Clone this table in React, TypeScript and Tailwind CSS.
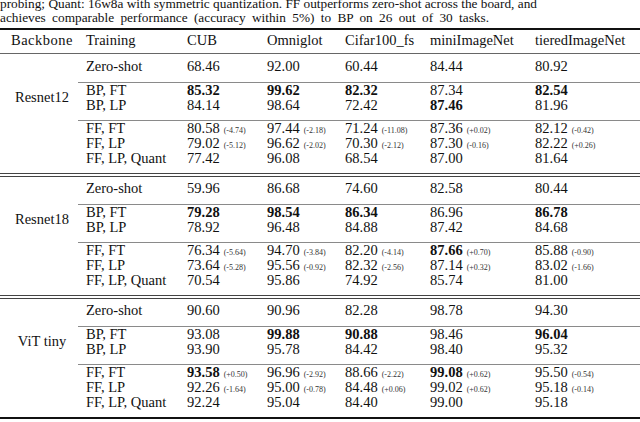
const serif = "font-['Liberation_Serif','Times_New_Roman',serif]";

type Cell = string;
type Row = [string, Cell[]];
type Group = { name: string; zs: Cell[]; bp: Row[]; ff: Row[] };

// "**" prefix = bold, "|" splits the small delta note
const groups: Group[] = [
  {
    name: "Resnet12",
    zs: ["68.46", "92.00", "60.44", "84.44", "80.92"],
    bp: [
      ["BP, FT", ["**85.32", "**99.62", "**82.32", "87.34", "**82.54"]],
      ["BP, LP", ["84.14", "98.64", "72.42", "**87.46", "81.96"]],
    ],
    ff: [
      ["FF, FT", ["80.58|-4.74", "97.44|-2.18", "71.24|-11.08", "87.36|+0.02", "82.12|-0.42"]],
      ["FF, LP", ["79.02|-5.12", "96.62|-2.02", "70.30|-2.12", "87.30|-0.16", "82.22|+0.26"]],
      ["FF, LP, Quant", ["77.42", "96.08", "68.54", "87.00", "81.64"]],
    ],
  },
  {
    name: "Resnet18",
    zs: ["59.96", "86.68", "74.60", "82.58", "80.44"],
    bp: [
      ["BP, FT", ["**79.28", "**98.54", "**86.34", "86.96", "**86.78"]],
      ["BP, LP", ["78.92", "96.48", "84.88", "87.42", "84.68"]],
    ],
    ff: [
      ["FF, FT", ["76.34|-5.64", "94.70|-3.84", "82.20|-4.14", "**87.66|+0.70", "85.88|-0.90"]],
      ["FF, LP", ["73.64|-5.28", "95.56|-0.92", "82.32|-2.56", "87.14|+0.32", "83.02|-1.66"]],
      ["FF, LP, Quant", ["70.54", "95.86", "74.92", "85.74", "81.00"]],
    ],
  },
  {
    name: "ViT tiny",
    zs: ["90.60", "90.96", "82.28", "98.78", "94.30"],
    bp: [
      ["BP, FT", ["93.08", "**99.88", "**90.88", "98.46", "**96.04"]],
      ["BP, LP", ["93.90", "95.78", "84.42", "98.40", "95.32"]],
    ],
    ff: [
      ["FF, FT", ["**93.58|+0.50", "96.96|-2.92", "88.66|-2.22", "**99.08|+0.62", "95.50|-0.54"]],
      ["FF, LP", ["92.26|-1.64", "95.00|-0.78", "84.48|+0.06", "99.02|+0.62", "95.18|-0.14"]],
      ["FF, LP, Quant", ["92.24", "95.04", "84.40", "99.00", "95.18"]],
    ],
  },
];

const cols = "grid grid-cols-[101px_80px_78px_85px_105px_1fr]";

function Value({ v }: { v: string }) {
  const bold = v.startsWith("**");
  const [num, note] = v.replace("**", "").split("|");
  return (
    <div className="h-[15px] pl-2 whitespace-nowrap">
      <span className={bold ? "font-bold" : ""}>{num}</span>
      {note && <span className="ml-[4px] text-[8px] leading-none text-[#333]">({note})</span>}
    </div>
  );
}

function Rows({ rows }: { rows: Row[] }) {
  return (
    <div className={cols}>
      {rows.map(([label, vals]) => (
        <div key={label} className="contents">
          <div className="h-[15px] pl-2 whitespace-nowrap">{label}</div>
          {vals.map((v, i) => (
            <Value key={i} v={v} />
          ))}
        </div>
      ))}
    </div>
  );
}

function GroupBlock({ g, first }: { g: Group; first: boolean }) {
  return (
    <div className="flex">
      <div className={`w-[78px] shrink-0 pl-[6px] text-center ${first ? "pt-[36px]" : "pt-[35px]"}`}>{g.name}</div>
      <div className={`flex-1 ${first ? "pt-[5px]" : "pt-[4px]"}`}>
        <div className="pb-[8px]">
          <Rows rows={[["Zero-shot", g.zs]]} />
        </div>
        <div className="h-px bg-[#8a8a8a]" />
        <div className="pb-[7px]">
          <Rows rows={g.bp} />
        </div>
        <div className="h-px bg-[#8a8a8a]" />
        <div className="pb-[7px]">
          <Rows rows={g.ff} />
        </div>
      </div>
    </div>
  );
}

function DoubleRule() {
  return (
    <div className="flex flex-col gap-[2px]">
      <div className="h-px bg-[#444]" />
      <div className="h-px bg-[#444]" />
    </div>
  );
}

export default function App() {
  return (
    <div className={`${serif} w-[640px] h-[422px] overflow-hidden bg-white text-[14.5px] leading-[15px] text-[#111]`}>
      <div className="-mt-[3px] mb-[3px] text-[13.3px] leading-[14px] whitespace-nowrap">
        <div>probing; Quant: 16w8a with symmetric quantization. FF outperforms zero-shot across the board, and</div>
        <div className="[word-spacing:3px]">achieves comparable performance (accuracy within 5%) to BP on 26 out of 30 tasks.</div>
      </div>
      <div className="h-[2px] bg-[#111]" />
      <div className="flex pt-[3px] pb-[5px]">
        <div className="w-[78px] shrink-0 pl-[6px] text-center tracking-[0.5px]">Backbone</div>
        <div className={`flex-1 ${cols}`}>
          {["Training", "CUB", "Omniglot", "Cifar100_fs", "miniImageNet", "tieredImageNet"].map((h) => (
            <div key={h} className="pl-2 whitespace-nowrap">
              {h}
            </div>
          ))}
        </div>
      </div>
      <div className="h-px bg-[#666]" />
      {groups.map((g, i) => (
        <div key={g.name}>
          {i > 0 && <DoubleRule />}
          <GroupBlock g={g} first={i === 0} />
        </div>
      ))}
      <div className="h-[2px] bg-[#111]" />
    </div>
  );
}
